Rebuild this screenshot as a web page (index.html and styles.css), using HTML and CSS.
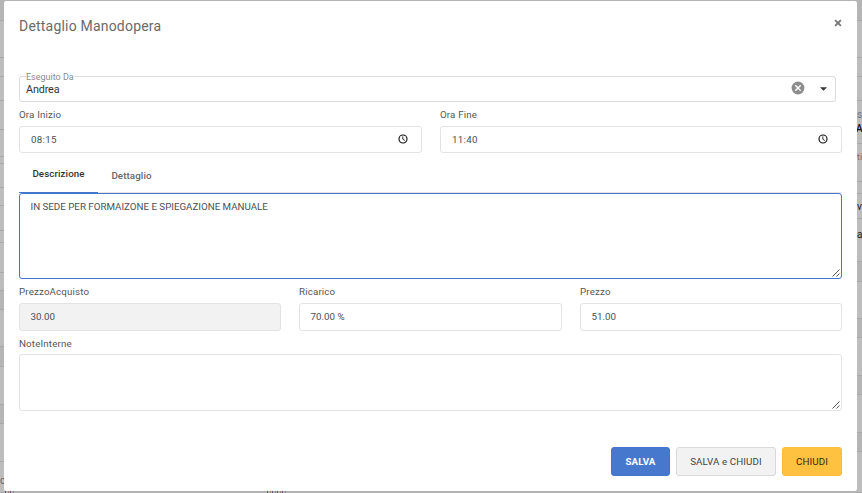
FILE: index.html
```html
<!DOCTYPE html>
<html lang="it">
<head>
<meta charset="utf-8">
<title>Dettaglio Manodopera</title>
<link rel="stylesheet" href="styles.css">
</head>
<body>
<div class="page">
  <div class="edge edge-left">
    <i class="band"></i><i></i><i></i><i></i><i></i><i></i><i></i><i></i><i></i><i></i><i></i><i></i><i></i>
    <i class="band"></i><i></i><i class="band"></i><i></i><i class="band"></i><i></i>
    <i class="cell">c</i>
  </div>
  <main class="modal">
    <header class="head">
      <h1><span>Dettaglio Manodopera</span></h1>
      <button class="close" aria-label="Chiudi finestra">
        <svg width="8" height="8" viewBox="0 0 8 8"><path d="M1.1 1.1 6.9 6.9M6.9 1.1 1.1 6.9" stroke="#777" stroke-width="1.9"/></svg>
      </button>
    </header>
    <div class="select">
      <span class="legend">Eseguito Da</span>
      <span class="value">Andrea</span>
      <svg class="clear" width="14" height="14" viewBox="0 0 14 14"><circle cx="7" cy="7" r="6.4" fill="#8c8c8c"/><path d="M4.3 4.3 9.7 9.7M9.7 4.3 4.3 9.7" stroke="#fff" stroke-width="1.5"/></svg>
      <svg width="7" height="4" viewBox="0 0 7 4"><path d="M0 .3h7L3.5 3.8z" fill="#333"/></svg>
    </div>
    <div class="row two">
      <div class="field">
        <label><span>Ora Inizio</span></label>
        <div class="input time"><span>08:15</span>
          <svg width="10" height="10" viewBox="0 0 10 10" fill="none" stroke="#111"><circle cx="5" cy="5" r="4" stroke-width="1.15"/><path d="M4.8 2.4v2.8l2 1.3" stroke-width=".9"/></svg></div>
      </div>
      <div class="field">
        <label><span>Ora Fine</span></label>
        <div class="input time"><span>11:40</span>
          <svg width="10" height="10" viewBox="0 0 10 10" fill="none" stroke="#111"><circle cx="5" cy="5" r="4" stroke-width="1.15"/><path d="M4.8 2.4v2.8l2 1.3" stroke-width=".9"/></svg></div>
      </div>
    </div>
    <nav class="tabs">
      <a class="tab active"><span>Descrizione</span></a>
      <a class="tab"><span>Dettaglio</span></a>
    </nav>
    <div class="area focus"><span>IN SEDE PER FORMAIZONE E SPIEGAZIONE MANUALE</span>
      <svg width="8" height="8" viewBox="0 0 8 8" stroke="#444"><path d="M.5 7.5l7-7M4.5 7.5l3-3" stroke-width=".9"/></svg></div>
    <div class="row three">
      <div class="field"><label><span>PrezzoAcquisto</span></label><div class="input readonly"><span>30.00</span></div></div>
      <div class="field"><label><span>Ricarico</span></label><div class="input"><span>70.00 %</span></div></div>
      <div class="field"><label><span>Prezzo</span></label><div class="input"><span>51.00</span></div></div>
    </div>
    <div class="field notes">
      <label><span>NoteInterne</span></label>
      <div class="area">
        <svg width="8" height="8" viewBox="0 0 8 8" stroke="#444"><path d="M.5 7.5l7-7M4.5 7.5l3-3" stroke-width=".9"/></svg></div>
    </div>
    <footer class="actions">
      <button class="btn primary"><span>SALVA</span></button>
      <button class="btn plain"><span>SALVA e CHIUDI</span></button>
      <button class="btn warn"><span>CHIUDI</span></button>
    </footer>
  </main>
  <div class="edge edge-right">
    <i class="band"></i><i></i><i></i><i></i>
    <i class="cell stack"><em>s</em><b>A</b></i>
    <i class="cell soft">ti</i><i></i>
    <i class="cell dark">v</i>
    <i class="cell dark">a</i>
    <i class="band"></i><i></i><i class="band"></i><i></i><i class="band"></i><i></i><i class="band"></i><i></i>
  </div>
  <div class="under"><b class="u1"></b><b class="u2"></b></div>
</div>
</body>
</html>
```
FILE: styles.css
```css
* { box-sizing: border-box; }
body { margin: 0; background: #b4b4b4; font-family: Roboto, sans-serif; font-size: 9.75px; color: #666; }
.page { display: grid; grid-template-columns: 4px 853px 5px; grid-template-rows: 1px 490px 2px; width: 862px; height: 493px; overflow: hidden; }

.edge { display: grid; grid-row: 1 / 4; overflow: hidden; font-size: 10px; }
.edge i { background: #bebdbd; border-bottom: 1px solid #a9a9a9; font-style: normal; overflow: hidden; }
.edge .band { background: #b5b5b5; }
.edge-left { grid-column: 1; grid-template-rows: 21px 37px 19px 24px 29px 27px 7px 24px 18px 25px 12px 30px 18px 19px 37px 20px 38px 19px 38px 31px; }
.edge-right { grid-column: 3; grid-template-rows: 21px 37px 19px 24px 43px 38px 12px 25px 43px 20px 37px 19px 38px 19px 38px 19px 41px; }
.edge .cell { line-height: 12px; white-space: nowrap; color: #666; }
.edge-left .cell { padding-top: 13px; }
.edge .stack { padding-top: 7px; }
.edge .stack em { display: block; color: #69728a; font-style: normal; line-height: 13px; }
.edge .stack b { display: block; color: #111; font-weight: 500; font-size: 10px; line-height: 15px; margin-left: -1px; }
.edge .soft { color: #8a6e68; padding-top: 7px; font-size: 9px; }
.edge .dark { color: #222; font-size: 10px; padding-top: 7px; }
.edge .dark + .dark { padding-top: 10px; }

.modal { grid-column: 2; grid-row: 2; background: #fff; border-radius: 2px; padding: 0 15px; display: flex; flex-direction: column; }
.under { grid-column: 2; grid-row: 3; display: flex; padding-left: 1px; }
.under b { height: 2px; opacity: .7; background: repeating-linear-gradient(90deg, #3c2b68 0 1px, #b4b4b4 1px 3px, #a06c42 3px 4px, #b4b4b4 4px 5px); }
.u1 { width: 10px; }
.u2 { width: 20px; margin-left: 252px; }

.head { height: 75px; display: flex; justify-content: space-between; align-items: flex-start; }
h1 { margin: 15px 0 0; font-size: 14px; line-height: 20px; font-weight: 400; color: #6a6a6a; letter-spacing: .2px; }
.close { margin: 18px 0 0; padding: 0; border: 0; background: none; width: 8px; height: 8px; display: flex; }

.select { height: 26px; width: 817px; border: 1px solid #dcdcdc; border-radius: 3px; padding: 0 8px 0 6px; display: flex; align-items: center; position: relative; color: #333; }
.legend { position: absolute; left: 6px; top: -6px; line-height: 13px; background: #fff; color: #8b8b8b; font-size: 9px; }
.value { flex: 1; font-size: 10.8px; letter-spacing: -.15px; padding-top: 1px; }
.clear { margin-right: 15px; margin-top: -2px; }
.select svg:last-child { margin-top: -1px; }

.row { display: grid; gap: 18px; }
.two { grid-template-columns: 403px 402px; }
.three { grid-template-columns: 262px 263px 262px; }
label { display: block; height: 24px; line-height: 26px; font-weight: 400; letter-spacing: .15px; color: #555; }
.input { height: 28px; border: 1px solid #e3e3e3; border-radius: 3px; padding: 0 11px; display: flex; align-items: center; color: #495057; }
.time { justify-content: space-between; height: 27px; padding-right: 13px; letter-spacing: .3px; }
.three .input { padding: 0 10.5px 2px; }
.input.time svg { margin-top: -1px; }
.readonly { background: #f2f2f2; }

.tabs { height: 40px; display: flex; border-bottom: 1px solid #e5e5e5; font-weight: 500; letter-spacing: .1px; }
.tab { padding: 0 13.4px; height: 40px; line-height: 46px; color: #666; }
.active { width: 79px; line-height: 42px; color: #333; border-bottom: 1px solid #4376cc; }
.area { display: flex; justify-content: space-between; border: 1px solid #e3e3e3; border-radius: 3px; height: 57px; padding: 6px 1px 1px 10.5px; line-height: 14px; color: #495057; }
.area svg { align-self: flex-end; margin-left: auto; }
.focus { height: 86px; border-color: #4376cc; }
.three label { line-height: 25px; }
.notes label { height: 23px; line-height: 26px; }

.actions { display: flex; justify-content: flex-end; gap: 6px; margin-top: 36px; }
.btn { height: 29px; border: 1px solid #4376cc; border-radius: 3px; padding: 0 0 1px; font: 400 9.75px Roboto, sans-serif; letter-spacing: .1px; }
.primary { width: 59px; background: #4678cd; color: #fff; font-weight: 700; }
.plain { width: 100px; background: #f2f2f2; border-color: #d9d9d9; color: #444; }
.warn { width: 60px; background: #ffc240; border-color: #fbbd3c; color: #33290f; }
```
